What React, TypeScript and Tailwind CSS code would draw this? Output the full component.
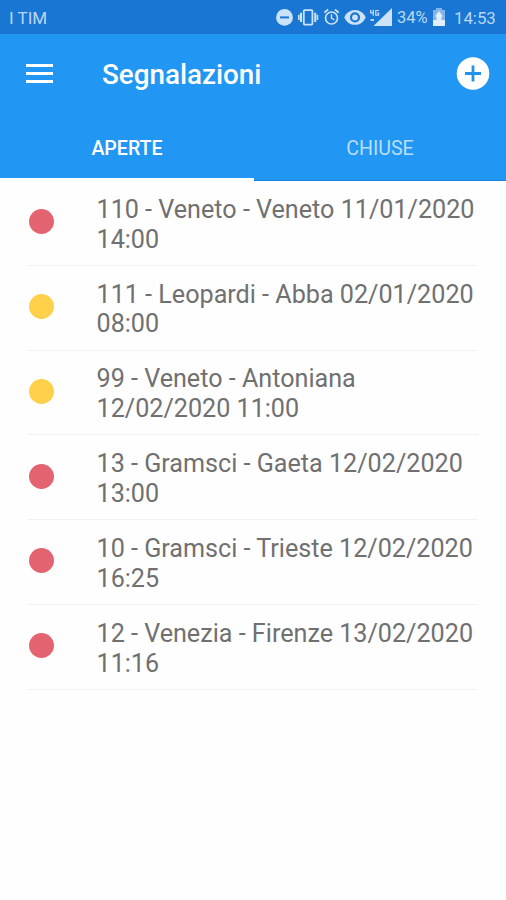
type Report = { title: string; time: string; urgent: boolean };

const reports: Report[] = [
  { title: '110 - Veneto - Veneto 11/01/2020', time: '14:00', urgent: true },
  { title: '111 - Leopardi - Abba 02/01/2020', time: '08:00', urgent: false },
  { title: '99 - Veneto - Antoniana', time: '12/02/2020 11:00', urgent: false },
  { title: '13 - Gramsci - Gaeta 12/02/2020', time: '13:00', urgent: true },
  { title: '10 - Gramsci - Trieste 12/02/2020', time: '16:25', urgent: true },
  { title: '12 - Venezia - Firenze 13/02/2020', time: '11:16', urgent: true },
];

function StatusIcons() {
  return (
    <svg width="120" height="34" viewBox="274 0 120 34" className="shrink-0 text-[#cbe2f9]" fill="none" stroke="currentColor">
      {/* do not disturb */}
      <circle cx="284.5" cy="17.4" r="8.4" fill="currentColor" stroke="none" />
      <path d="M280 17.4h9" stroke="#1976d2" strokeWidth="2" />
      {/* vibrate */}
      <rect x="303.8" y="10.2" width="8.6" height="14.4" rx="0.8" strokeWidth="1.8" />
      <path d="M301 12.7v9.4M315.2 12.7v9.4" strokeWidth="2" />
      <path d="M298.8 14.7v5.4M317.4 14.7v5.4" strokeWidth="1.6" />
      {/* alarm */}
      <circle cx="331.5" cy="18" r="6" strokeWidth="1.7" />
      <path d="M331.5 14.2v4l2.8 1.8" strokeWidth="1.4" />
      <path d="M324.3 12.6l3.8-3.1M338.7 12.6l-3.8-3.1" strokeWidth="1.8" />
      {/* eye */}
      <path
        d="M344.3 17.4c1.9-4.5 6-7.4 10.7-7.4s8.8 2.9 10.7 7.4c-1.9 4.500-6 7.400-10.700 7.400s-8.800-2.900-10.700-7.400z"
        fill="currentColor"
        stroke="none"
      />
      <circle cx="355" cy="17.4" r="4" fill="currentColor" stroke="#1976d2" strokeWidth="2.2" />
      {/* signal */}
      <path d="M392 8v18h-18.5z" fill="currentColor" stroke="none" />
      <path d="M370.5 20h3.5" strokeWidth="1.8" />
      <path d="M370.7 10v3h3.3M373.2 9.800v6M378.800 10.500h-3v4.700h2.800v-2.200h-1.300" strokeWidth="1.2" />
    </svg>
  );
}

function BatteryIcon() {
  return (
    <svg width="14" height="20" viewBox="0 0 14 20" className="ml-[5px] shrink-0">
      <path d="M4 1h6v2h3v16H1V3h3z" fill="#83b5ec" />
      <path d="M1 13h3.5V9.5H3L7 4l4 5.5H9.5V13H13v6H1z" fill="#e1effc" />
    </svg>
  );
}

export default function App() {
  return (
    <div className="flex h-[900px] w-[506px] flex-col overflow-hidden bg-[#fefefe] font-['Roboto',sans-serif]">
      <div className="flex h-[34px] shrink-0 items-center bg-[#1976d2] text-[#b9d7f4]">
        <span className="w-[274px] pl-[9px] pt-[2px] text-[17px] leading-[20px]">I TIM</span>
        <StatusIcons />
        <span className="w-[33px] pl-[3px] pt-px text-[16.5px] leading-[20px]">34%</span>
        <BatteryIcon />
        <span className="pl-2 pt-[2px] text-[16.8px] leading-[20px]">14:53</span>
      </div>

      <header className="flex h-[80px] shrink-0 items-center bg-[#2196f3] pl-[26px] pr-4">
        <button aria-label="Menu" className="mb-[2px] flex w-[27px] flex-col gap-[5px]">
          <span className="h-[3px] bg-white" />
          <span className="h-[3px] bg-white" />
          <span className="h-[3px] bg-white" />
        </button>
        <h1 className="ml-[49px] flex-1 pt-[2px] text-[27.8px] font-medium leading-[32px] text-white">Segnalazioni</h1>
        <button aria-label="Aggiungi">
          <svg width="34" height="34" viewBox="0 0 34 34">
            <circle cx="17" cy="16.5" r="16.3" fill="#fff" />
            <path d="M17 8.5v16M9 16.5h16" stroke="#2492e6" strokeWidth="2.8" />
          </svg>
        </button>
      </header>

      <div className="flex h-[66.5px] shrink-0 bg-[#2196f3] text-[19.6px]">
        <div className="flex w-[254px] flex-col">
          <span className="flex-1 pt-[22.5px] text-center font-medium leading-[24px] text-white">APERTE</span>
          <span className="h-[3px] bg-white" />
        </div>
        <span className="flex-1 border-b border-[#1583db] pt-[22.5px] text-center leading-[24px] text-[#b8defb]">CHIUSE</span>
      </div>

      <ul className="px-[28px] pt-[0.5px]">
        {reports.map((r) => (
          <li key={r.title} className="flex h-[84.8px] items-center border-b border-[#f1f1f1]">
            <span className={`ml-[0.5px] mb-[2.4px] h-[25px] w-[25px] rounded-full ${r.urgent ? 'bg-[#e46371]' : 'bg-[#ffd04a]'}`} />
            <p className="ml-[43px] whitespace-nowrap pt-[3.4px] text-[25.15px] leading-[29.7px] text-[#707070]">
              {r.title}
              <br />
              {r.time}
            </p>
          </li>
        ))}
      </ul>
    </div>
  );
}
